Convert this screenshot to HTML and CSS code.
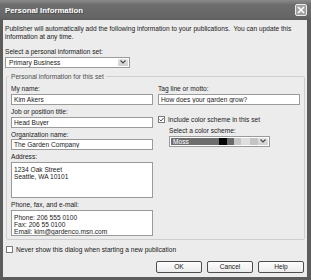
FILE: index.html
```html
<!DOCTYPE html>
<html>

<head>
    <meta charset="utf-8">
    <meta name="viewport" content="width=device-width">
    <link rel="stylesheet" href="styles.css">
</head>

<body>
    <div class="window">
        <div class="titlebar">
            <span class="title">Personal Information</span>
            <span class="close">
                <svg width="8" height="8" viewBox="0 0 8 8">
                    <path d="M1 1 L7 7 M7 1 L1 7" stroke="#fff" stroke-width="1.7" fill="none"/>
                </svg>
            </span>
        </div>
        <div class="content">
            <p class="intro">Publisher will automatically add the following information to your publications.&nbsp; You can update this information at any time.</p>
            <label class="label set-label">Select a personal information set:</label>
            <div class="select set-select">
                <span class="select-text">Primary Business</span>
                <span class="drop">
                    <svg width="6" height="4" viewBox="0 0 6 4">
                        <path d="M0.5 0.5 L3 3 L5.5 0.5" stroke="#4a4a4a" stroke-width="1.2" fill="none"/>
                    </svg>
                </span>
            </div>
            <fieldset class="group">
                <legend>Personal information for this set</legend>
                <div class="columns">
                    <div class="column">
                        <label class="label" for="name">My name:</label>
                        <input class="text" id="name" value="Kim Akers">
                        <label class="label" for="job">Job or position title:</label>
                        <input class="text" id="job" value="Head Buyer">
                        <label class="label" for="org">Organization name:</label>
                        <input class="text" id="org" value="The Garden Company">
                        <label class="label" for="address">Address:</label>
                        <textarea class="text area address" id="address">1234 Oak Street
Seattle, WA 10101</textarea>
                        <label class="label" for="contact">Phone, fax, and e-mail:</label>
                        <textarea class="text area contact" id="contact">Phone: 206 555 0100
Fax: 206 55 0100
Email: kim@gardenco.msn.com</textarea>
                    </div>
                    <div class="column">
                        <label class="label" for="tagline">Tag line or motto:</label>
                        <input class="text" id="tagline" value="How does your garden grow?">
                        <div class="check scheme-check">
                            <span class="box">
                                <svg width="5" height="5" viewBox="0 0 5 5">
                                    <path d="M0.5 2.5 L2 4 L4.5 1" stroke="#505050" stroke-width="1" fill="none"/>
                                </svg>
                            </span>
                            Include color scheme in this set
                        </div>
                        <label class="label indent">Select a color scheme:</label>
                        <div class="select scheme-select indent">
                            <span class="scheme-name">Moss</span>
                            <span class="swatch" style="width: 8px; background: #050505"></span>
                            <span class="swatch" style="width: 7px; background: #6a6a6a"></span>
                            <span class="swatch" style="width: 7px; background: #c6c6c6"></span>
                            <span class="swatch" style="width: 9px; background: #dedede"></span>
                            <span class="swatch" style="width: 8px; background: #c4c4c4"></span>
                            <span class="drop">
                                <svg width="6" height="4" viewBox="0 0 6 4">
                                    <path d="M0.5 0.5 L3 3 L5.5 0.5" stroke="#4a4a4a" stroke-width="1.2" fill="none"/>
                                </svg>
                            </span>
                        </div>
                    </div>
                </div>
            </fieldset>
            <div class="check never">
                <span class="box"></span>
                Never show this dialog when starting a new publication
            </div>
            <div class="buttons">
                <button>OK</button>
                <button>Cancel</button>
                <button>Help</button>
            </div>
        </div>
    </div>
</body>

</html>
```

FILE: styles.css
```css
body {
    margin: 0;
    font-family: "Liberation Sans", Arial, sans-serif;
    font-size: 6.6px;
    color: #1a1a1a;
}

.window {
    width: 311px;
    height: 280px;
    display: flex;
    flex-direction: column;
    background: #5c5c5c;
}

.titlebar {
    height: 20px;
    flex: none;
    display: flex;
    align-items: center;
    justify-content: space-between;
    padding: 0 4px 0 5px;
    background: linear-gradient(#8a8a8a, #6c6c6c 25%, #676767 80%, #5e5e5e);
}

.title {
    color: #fff;
    font-size: 7.8px;
    font-weight: bold;
    text-shadow: 1px 1px 0 #4a4a4a;
}

.close {
    width: 12px;
    height: 12px;
    box-sizing: border-box;
    display: flex;
    align-items: center;
    justify-content: center;
    background: #a2a2a2;
    border: 1px solid #ececec;
    border-radius: 2px;
}

.content {
    flex: 1;
    margin: 0 4px 3px 3px;
    padding: 5.3px 2px 0 2px;
    background: #ececec;
}

.intro {
    margin: 0;
    line-height: 7.3px;
}

.label {
    display: block;
    line-height: 7.3px;
    margin-bottom: 1.5px;
}

.set-label {
    margin-top: 8px;
}

.select {
    height: 11px;
    box-sizing: border-box;
    display: flex;
    align-items: stretch;
    padding: 1px;
    background: #fff;
    border: 1px solid #9a9a9a;
}

.set-select {
    width: 125px;
}

.select-text {
    flex: 1;
    padding-left: 2px;
    line-height: 7px;
}

.drop {
    width: 10px;
    display: flex;
    align-items: center;
    justify-content: center;
    background: linear-gradient(#e4e4e4, #d0d0d0);
    border-radius: 1px;
}

.group {
    margin: 5.5px 0 0 1px;
    padding: 4.5px 4px 3px 4px;
    border: 1px solid #cfcfcf;
    border-radius: 2px;
}

.group legend {
    padding: 0 2px;
    margin-left: -2px;
    line-height: 7.3px;
    color: #4e4e4e;
}

.columns {
    display: grid;
    grid-template-columns: 1fr 1fr;
    column-gap: 5px;
}

.text {
    display: block;
    width: 100%;
    height: 11px;
    box-sizing: border-box;
    margin: 0 0 3px;
    padding: 0 2px;
    border: 1px solid #9a9a9a;
    background: #fff;
    font: inherit;
    color: inherit;
}

.text:focus {
    outline: none;
}

.area {
    padding: 3px 2px;
    line-height: 7.3px;
    resize: none;
    overflow: hidden;
}

.address {
    height: 35.6px;
}

.contact {
    height: 26.5px;
    margin-bottom: 0;
}

.check {
    display: flex;
    align-items: center;
    gap: 3px;
}

.box {
    width: 7px;
    height: 7px;
    box-sizing: border-box;
    display: flex;
    align-items: center;
    justify-content: center;
    background: #fff;
    border: 1px solid #7a7a7a;
}

.scheme-check {
    height: 11px;
    margin-top: 8.8px;
}

.indent {
    margin-left: 11px;
}

.scheme-check + .label {
    margin-top: 2.5px;
}

.scheme-select {
    width: 101px;
}

.scheme-name {
    flex: 1;
    padding-left: 2px;
    line-height: 7px;
    color: #fff;
    background: #6e6e6e;
}

.never {
    height: 8px;
    margin: 5.5px 0 0 1px;
}

.buttons {
    display: flex;
    justify-content: flex-end;
    gap: 5px;
    margin-top: 7px;
    padding-right: 1px;
}

.buttons button {
    width: 46px;
    height: 12px;
    padding: 0;
    font: inherit;
    color: inherit;
    background: linear-gradient(#fdfdfd, #ececec);
    border: 1px solid #4e4e4e;
    border-radius: 2px;
}
```
